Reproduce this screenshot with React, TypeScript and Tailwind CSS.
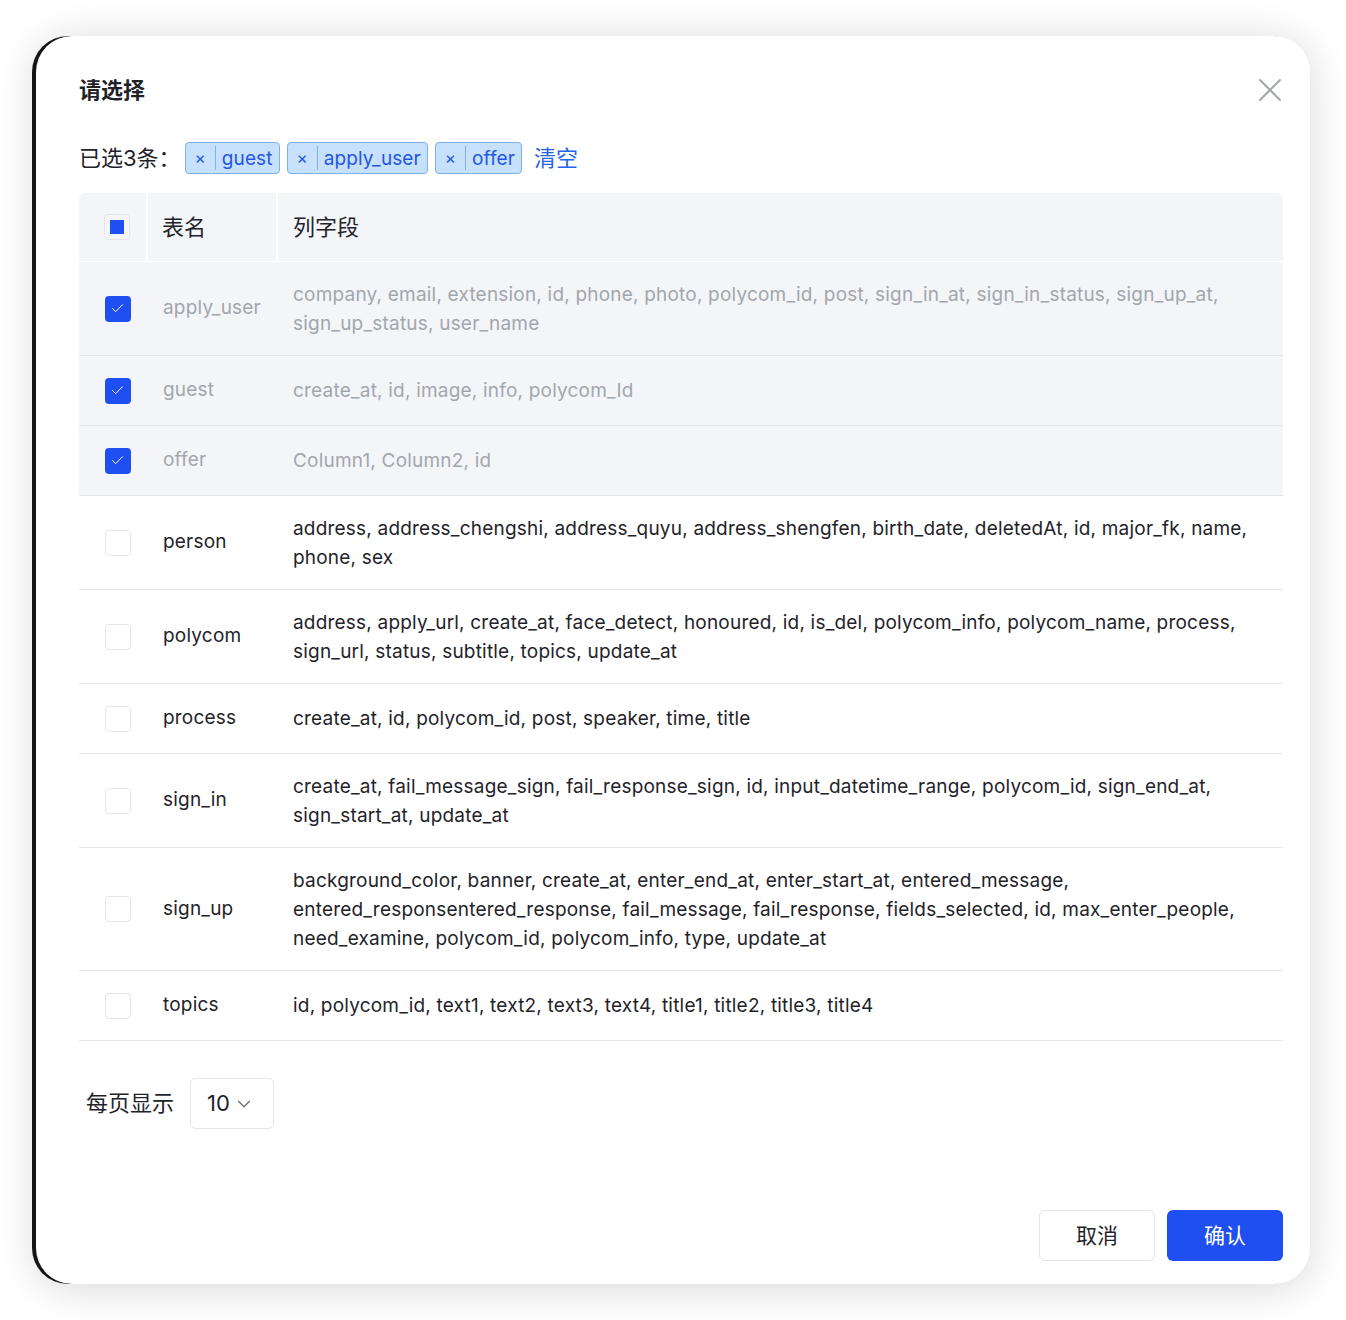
import { Check, ChevronDown } from "lucide-react";

interface TableRow {
  name: string;
  fields: string;
  checked: boolean;
}

const ROWS: TableRow[] = [
  {
    name: "apply_user",
    fields:
      "company, email, extension, id, phone, photo, polycom_id, post, sign_in_at, sign_in_status, sign_up_at, sign_up_status, user_name",
    checked: true,
  },
  { name: "guest", fields: "create_at, id, image, info, polycom_Id", checked: true },
  { name: "offer", fields: "Column1, Column2, id", checked: true },
  {
    name: "person",
    fields:
      "address, address_chengshi, address_quyu, address_shengfen, birth_date, deletedAt, id, major_fk, name, phone, sex",
    checked: false,
  },
  {
    name: "polycom",
    fields:
      "address, apply_url, create_at, face_detect, honoured, id, is_del, polycom_info, polycom_name, process, sign_url, status, subtitle, topics, update_at",
    checked: false,
  },
  { name: "process", fields: "create_at, id, polycom_id, post, speaker, time, title", checked: false },
  {
    name: "sign_in",
    fields:
      "create_at, fail_message_sign, fail_response_sign, id, input_datetime_range, polycom_id, sign_end_at, sign_start_at, update_at",
    checked: false,
  },
  {
    name: "sign_up",
    fields:
      "background_color, banner, create_at, enter_end_at, enter_start_at, entered_message, entered_responsentered_response, fail_message, fail_response, fields_selected, id, max_enter_people, need_examine, polycom_id, polycom_info, type, update_at",
    checked: false,
  },
  { name: "topics", fields: "id, polycom_id, text1, text2, text3, text4, title1, title2, title3, title4", checked: false },
];

const TAGS = ["guest", "apply_user", "offer"];

function RowCheckbox({ checked }: { checked: boolean }) {
  if (checked) {
    return (
      <span className="flex h-[26px] w-[26px] items-center justify-center rounded-[4px] bg-[#1f4ff0]">
        <Check className="h-[15px] w-[15px] text-white" strokeWidth={1.6} />
      </span>
    );
  }
  return <span className="block h-[26px] w-[26px] rounded-[4px] border border-[#e3e5e9] bg-white" />;
}

export default function App() {
  return (
    <div className="min-h-[1320px] bg-white p-[36px] font-['Inter','Noto_Sans_CJK_SC',sans-serif] text-[#1f2329]">
      <div className="flex h-[1248px] w-[1274px] flex-col rounded-[36px] bg-white pb-[23px] pl-[43px] pr-[27px] pt-[36px] shadow-[-4px_0_0_#151515,0_4px_40px_rgba(0,0,0,0.16)]">
        <div className="flex items-center justify-between">
          <h2 className="text-[22px] font-bold leading-[36px]">请选择</h2>
          <svg width="22" height="22" viewBox="0 0 22 22" className="mr-[2px] text-[#a3a6ad]">
            <path d="M1 1L21 21M21 1L1 21" stroke="currentColor" strokeWidth="2" strokeLinecap="round" />
          </svg>
        </div>

        <div className="mt-[34px] flex items-center gap-[7px]">
          <span className="-mr-[3px] text-[22px] leading-[32px]">已选3条：</span>
          {TAGS.map((tag) => (
            <span
              key={tag}
              className="flex h-[32px] items-center rounded-[4px] border border-[#7db1f5] bg-[#c7e0fb] text-[#2357e0]"
            >
              <span className="px-[9px] text-[17px] leading-none">×</span>
              <span className="h-[24px] w-px bg-[#7db1f5]" />
              <span className="px-[6px] text-[19px] leading-none tracking-[0.1px]">{tag}</span>
            </span>
          ))}
          <span className="ml-[5px] text-[22px] leading-[32px] text-[#2563eb]">清空</span>
        </div>

        <div className="mt-[19px]">
          <div className="flex h-[69px] rounded-t-[6px] border-b border-white bg-[#f3f5f9]">
            <div className="flex w-[69px] items-center justify-center border-r-2 border-white pl-[8px]">
              <span className="flex h-[26px] w-[26px] items-center justify-center rounded-[4px] border border-[#e3e5e9] bg-[#f3f5f9]">
                <span className="h-[14px] w-[14px] bg-[#1f4ff0]" />
              </span>
            </div>
            <div className="flex w-[130px] items-center border-r-2 border-white pl-[14px] text-[22px]">表名</div>
            <div className="flex flex-1 items-center pl-[15px] text-[22px]">列字段</div>
          </div>

          {ROWS.map((row) => (
            <div
              key={row.name}
              className={`flex border-b border-[#e4e6ea] ${row.checked ? "bg-[#f3f5f9] text-[#a3a6ad]" : "text-[#1f2329]"}`}
            >
              <div className="flex w-[69px] shrink-0 items-center justify-center py-[21.5px] pl-[8px]">
                <RowCheckbox checked={row.checked} />
              </div>
              <div className="flex w-[130px] shrink-0 items-center pl-[15px] text-[19px] tracking-[0.2px]">
                {row.name}
              </div>
              <div className="flex flex-1 items-center py-[17.5px] pl-[15px] pr-[15px] text-[19px] leading-[29px] tracking-[0.2px]">
                {row.fields}
              </div>
            </div>
          ))}
        </div>

        <div className="mt-[37px] flex items-center gap-[16px] pl-[7px]">
          <span className="text-[22px]">每页显示</span>
          <div className="flex h-[51px] w-[84px] items-center gap-[3px] rounded-[6px] border border-[#e3e5e9] pl-[16px]">
            <span className="text-[22px]">10</span>
            <ChevronDown className="h-[22px] w-[22px] text-[#6b6f76]" strokeWidth={1.5} />
          </div>
        </div>

        <div className="mt-auto flex justify-end gap-[12px]">
          <button className="h-[51px] w-[116px] rounded-[6px] border border-[#e3e5e9] bg-white text-[21px] text-[#1f2329]">
            取消
          </button>
          <button className="h-[51px] w-[116px] rounded-[6px] bg-[#1f4ff0] text-[21px] text-white">确认</button>
        </div>
      </div>
    </div>
  );
}
